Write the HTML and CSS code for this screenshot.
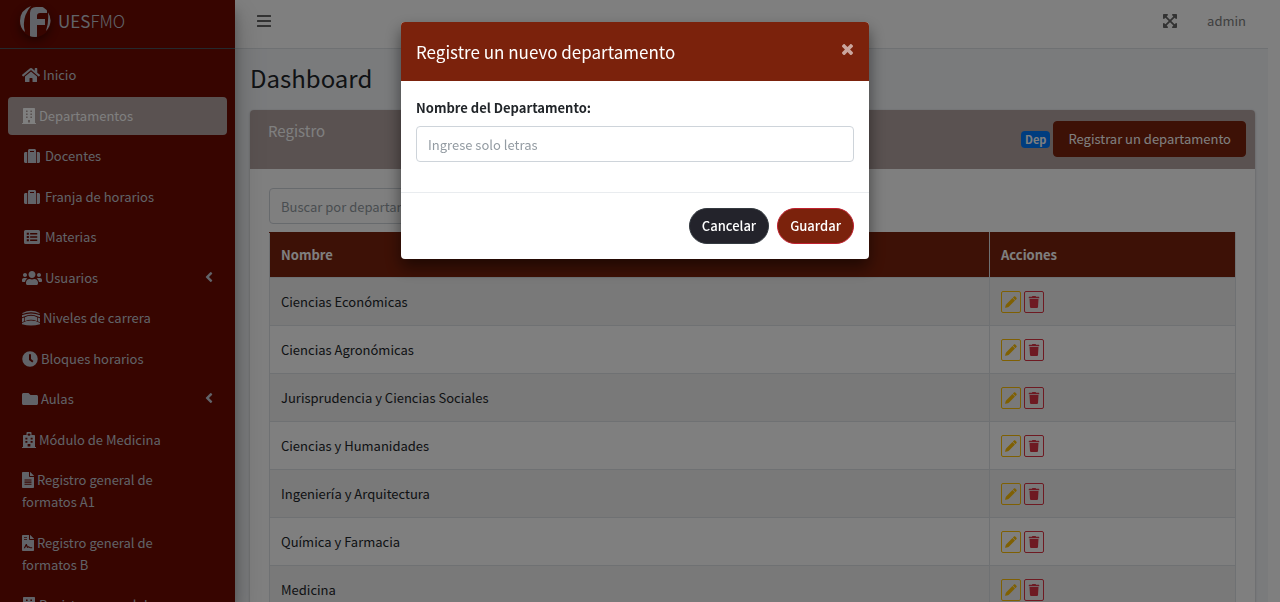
FILE: index.html
```html
<!DOCTYPE html>
<html lang="es">
<head>
<meta charset="utf-8">
<meta name="viewport" content="width=device-width, initial-scale=1">
<title>UESFMO - Departamentos</title>
<link rel="stylesheet" href="styles.css">
</head>
<body>
<svg class="sprite" aria-hidden="true">
  <symbol id="home" viewBox="0 0 576 512"><path d="M280.37 148.26L96 300.11V464a16 16 0 0 0 16 16l112.06-.29a16 16 0 0 0 15.92-16V368a16 16 0 0 1 16-16h64a16 16 0 0 1 16 16v95.64a16 16 0 0 0 16 16.05L464 480a16 16 0 0 0 16-16V300L295.67 148.26a12.19 12.19 0 0 0-15.3 0zM571.6 251.47L488 182.56V44.05a12 12 0 0 0-12-12h-56a12 12 0 0 0-12 12v72.61L318.47 43a48 48 0 0 0-61 0L4.34 251.47a12 12 0 0 0-1.6 16.9l25.5 31A12 12 0 0 0 45.15 301l235.22-193.74a12.19 12.19 0 0 1 15.3 0L530.9 301a12 12 0 0 0 16.9-1.6l25.5-31a12 12 0 0 0-1.7-16.93z"/></symbol>
  <symbol id="building" viewBox="0 0 448 512"><path fill-rule="evenodd" d="M436 480h-20V24a24 24 0 0 0-24-24H56a24 24 0 0 0-24 24v456H12a12 12 0 0 0-12 12v20h448v-20a12 12 0 0 0-12-12zM128 76h52v52h-52zM128 172h52v52h-52zM128 268h52v52h-52zM268 76h52v52h-52zM268 172h52v52h-52zM268 268h52v52h-52zM192 384h64v80h-64z"/></symbol>
  <symbol id="suitcase" viewBox="0 0 512 512"><path fill-rule="evenodd" d="M128 480h256V80c0-26.500-21.500-48-48-48H176c-26.500 0-48 21.500-48 48v400zm64-384h128v32H192V96zm320 80v256c0 26.500-21.500 48-48 48h-56V128h56c26.500 0 48 21.500 48 48zM104 480H48c-26.500 0-48-21.500-48-48V176c0-26.500 21.500-48 48-48h56v352z"/></symbol>
  <symbol id="list" viewBox="0 0 512 512"><path fill-rule="evenodd" d="M48 32h416a48 48 0 0 1 48 48v352a48 48 0 0 1-48 48H48a48 48 0 0 1-48-48V80a48 48 0 0 1 48-48zM88 118v68h68v-68zM88 222v68h68v-68zM88 326v68h68v-68zM196 130v44h228v-44zM196 234v44h228v-44zM196 338v44h228v-44z"/></symbol>
  <symbol id="users" viewBox="0 0 640 512"><path d="M96 224c35.300 0 64-28.700 64-64s-28.700-64-64-64-64 28.700-64 64 28.700 64 64 64zm448 0c35.300 0 64-28.700 64-64s-28.700-64-64-64-64 28.700-64 64 28.700 64 64 64zm32 32h-64c-17.600 0-33.500 7.100-45.100 18.600 40.300 22.100 68.900 62 75.100 109.400h66c17.700 0 32-14.300 32-32v-32c0-35.300-28.700-64-64-64zm-256 0c61.900 0 112-50.100 112-112S381.900 32 320 32 208 82.100 208 144s50.100 112 112 112zm76.800 32h-8.300c-20.800 10-43.900 16-68.500 16s-47.600-6-68.500-16h-8.300C179.600 288 128 339.600 128 403.200V432c0 26.500 21.500 48 48 48h288c26.500 0 48-21.500 48-48v-28.800c0-63.600-51.600-115.200-115.200-115.200zm-223.700-13.400C161.500 263.100 145.600 256 128 256H64c-35.300 0-64 28.700-64 64v32c0 17.700 14.300 32 32 32h65.900c6.300-47.400 34.900-87.300 75.200-109.400z"/></symbol>
  <symbol id="levels" viewBox="0 0 576 512"><path d="M14 96Q288-42 562 96v34Q288 10 14 130zM0 166Q288 50 576 166v64l-66-22Q288 100 66 208L0 230zM0 262l70-24v120L0 390zM576 262l-70-24v120l70 32zM92 232Q288 142 484 232v126Q288 270 92 358zM0 412Q288 256 576 412v40Q288 540 0 452z"/></symbol>
  <symbol id="clock" viewBox="0 0 512 512"><path fill-rule="evenodd" d="M256 8a248 248 0 1 0 0 496 248 248 0 0 0 0-496zM224 104h64v150l78 62-38 50-104-78z"/></symbol>
  <symbol id="folder" viewBox="0 0 512 512"><path d="M464 128H272l-64-64H48C21.500 64 0 85.500 0 112v288c0 26.500 21.500 48 48 48h416c26.500 0 48-21.500 48-48V176c0-26.500-21.500-48-48-48z"/></symbol>
  <symbol id="hospital" viewBox="0 0 448 512"><path fill-rule="evenodd" d="M448 492v20H0v-20c0-7 5-12 12-12h20V120c0-14 10-24 24-24h88V24c0-14 10-24 24-24h112c14 0 24 10 24 24v72h88c14 0 24 10 24 24v360h20c7 0 12 5 12 12zM180 384v80h88v-80zM108 180v56h64v-56zM276 180v56h64v-56zM108 284v56h64v-56zM276 284v56h64v-56zM206 38v28h-28v34h28v28h36v-28h28V66h-28V38z"/></symbol>
  <symbol id="file" viewBox="0 0 384 512"><path fill-rule="evenodd" d="M224 136V0H24C10 0 0 10 0 24v464c0 14 10 24 24 24h336c14 0 24-10 24-24V160H248c-13 0-24-11-24-24zM80 236h224v36H80zM80 304h224v36H80zM80 372h224v36H80zM256 0v128h128v-6L263 0z"/></symbol>
  <symbol id="contract" viewBox="0 0 384 512"><path fill-rule="evenodd" d="M224 136V0H24C10 0 0 10 0 24v464c0 14 10 24 24 24h336c14 0 24-10 24-24V160H248c-13 0-24-11-24-24zM64 62h96v26H64zM64 128h96v26H64zM58 414l62-116c8-16 28-16 36 0l28 68c22-16 46-12 58 8 8 12 18 16 34 16h50v32h-54c-28 0-44-10-56-28-14 20-44 28-60 4l-20-44-42 72H58zM256 0v128h128v-6L263 0z"/></symbol>
  <symbol id="chevron" viewBox="0 0 256 512"><path d="M32 239L168 103a24 24 0 0 1 34 0l22 22a24 24 0 0 1 0 34L127 256l97 96a24 24 0 0 1 0 34l-22 23a24 24 0 0 1-34 0L32 273a24 24 0 0 1 0-34z"/></symbol>
  <symbol id="bars" viewBox="0 0 448 512"><path d="M16 66h416a16 16 0 0 1 16 16v30a16 16 0 0 1-16 16H16a16 16 0 0 1-16-16V82a16 16 0 0 1 16-16zM16 225h416a16 16 0 0 1 16 16v30a16 16 0 0 1-16 16H16a16 16 0 0 1-16-16v-30a16 16 0 0 1 16-16zM16 384h416a16 16 0 0 1 16 16v30a16 16 0 0 1-16 16H16a16 16 0 0 1-16-16v-30a16 16 0 0 1 16-16z"/></symbol>
  <symbol id="expand" viewBox="0 0 448 512"><path d="M448 56v112c0 21-26 32-41 17l-36-36-107 107 107 107 36-36c15-15 41-4 41 17v112c0 13-11 24-24 24H312c-21 0-32-26-17-41l36-36-107-107-107 107 36 36c15 15 4 41-17 41H24c-13 0-24-11-24-24V344c0-21 26-32 41-17l36 36 107-107L77 149l-36 36c-15 15-41 4-41-17V56c0-13 11-24 24-24h112c21 0 32 26 17 41l-36 36 107 107 107-107-36-36c-15-15-4-41 17-41h112c13 0 24 11 24 24z"/></symbol>
  <symbol id="pencil" viewBox="0 0 512 512"><path d="M490 130l-46 46-108-108 46-46c16-16 40-16 56 0l52 52c16 16 16 40 0 56zM318 86l108 108-262 262c-12 12-24 18-40 22L30 506c-14 4-28-10-24-24l28-94c4-16 10-28 22-40z"/></symbol>
  <symbol id="trash" viewBox="0 0 448 512"><path d="M432 32H312l-9-19a24 24 0 0 0-22-13H167a24 24 0 0 0-22 13l-9 19H16A16 16 0 0 0 0 48v32a16 16 0 0 0 16 16h416a16 16 0 0 0 16-16V48a16 16 0 0 0-16-16zM32 128l21 339a48 48 0 0 0 48 45h246a48 48 0 0 0 48-45l21-339z"/></symbol>
  <symbol id="times" viewBox="0 0 352 352"><path d="M258 176l82-82c16-16 16-36 0-52L310 12c-16-16-36-16-52 0l-82 82-82-82C78-4 58-4 42 12L12 42c-16 16-16 36 0 52l82 82-82 82c-16 16-16 36 0 52l30 30c16 16 36 16 52 0l82-82 82 82c16 16 36 16 52 0l30-30c16-16 16-36 0-52z"/></symbol>
</svg>

<div class="app">
  <aside class="sidebar">
    <a class="brand" href="#">
      <svg class="brand-logo" viewBox="0 0 32 32" aria-hidden="true"><path d="M12 1Q1 5 1 16q0 7 5 11Q2 13 12 1zM11 32V8q0-6 6-6h11v6h-7q-3 0-3 3v3h8v6h-8v12zM29 7q6 10-2 19 3-9 2-19z"/></svg>
      <span class="brand-text"><b>UES</b>FMO</span>
    </a>
    <nav>
      <ul class="menu">
        <li><a href="#"><svg class="i18"><use href="#home"/></svg> Inicio</a></li>
        <li><a class="active" href="#"><svg class="i14"><use href="#building"/></svg> Departamentos</a></li>
        <li><a href="#"><svg class="i20"><use href="#suitcase"/></svg> Docentes</a></li>
        <li><a href="#"><svg class="i20"><use href="#suitcase"/></svg> Franja de horarios</a></li>
        <li><a href="#"><svg class="i20"><use href="#list"/></svg> Materias</a></li>
        <li><a href="#"><svg class="i20"><use href="#users"/></svg> Usuarios<svg class="arrow"><use href="#chevron"/></svg></a></li>
        <li><a href="#"><svg class="i18"><use href="#levels"/></svg> Niveles de carrera</a></li>
        <li><a href="#"><svg class="i16"><use href="#clock"/></svg> Bloques horarios</a></li>
        <li><a href="#"><svg class="i16"><use href="#folder"/></svg> Aulas<svg class="arrow"><use href="#chevron"/></svg></a></li>
        <li><a href="#"><svg class="i14"><use href="#hospital"/></svg> Módulo de Medicina</a></li>
        <li><a href="#"><svg class="i12"><use href="#file"/></svg> Registro general de<br>formatos A1</a></li>
        <li><a href="#"><svg class="i12"><use href="#contract"/></svg> Registro general de<br>formatos B</a></li>
        <li><a href="#"><svg class="i14"><use href="#building"/></svg> Registro general de</a></li>
      </ul>
    </nav>
  </aside>

  <div class="page">
    <header class="topbar">
      <button class="icon-btn" type="button" aria-label="Menú"><svg class="i14"><use href="#bars"/></svg></button>
      <div class="topbar-right">
        <button class="icon-btn" type="button" aria-label="Pantalla completa"><svg class="i14"><use href="#expand"/></svg></button>
        <a href="#">admin</a>
      </div>
    </header>
    <main class="content">
      <h1>Dashboard</h1>
      <section class="card">
        <div class="card-header">
          <h2>Registro</h2>
          <div class="card-tools">
            <span class="badge">Dep</span>
            <button class="btn btn-main" type="button">Registrar un departamento</button>
          </div>
        </div>
        <div class="card-body">
          <input class="field search" type="text" placeholder="Buscar por departamento" aria-label="Buscar por departamento">
          <table class="table">
            <thead><tr><th>Nombre</th><th class="actions">Acciones</th></tr></thead>
            <tbody>
              <tr><td>Ciencias Económicas</td><td><button class="mini edit" type="button" aria-label="Editar"><svg><use href="#pencil"/></svg></button><button class="mini del" type="button" aria-label="Eliminar"><svg><use href="#trash"/></svg></button></td></tr>
              <tr><td>Ciencias Agronómicas</td><td><button class="mini edit" type="button" aria-label="Editar"><svg><use href="#pencil"/></svg></button><button class="mini del" type="button" aria-label="Eliminar"><svg><use href="#trash"/></svg></button></td></tr>
              <tr><td>Jurisprudencia y Ciencias Sociales</td><td><button class="mini edit" type="button" aria-label="Editar"><svg><use href="#pencil"/></svg></button><button class="mini del" type="button" aria-label="Eliminar"><svg><use href="#trash"/></svg></button></td></tr>
              <tr><td>Ciencias y Humanidades</td><td><button class="mini edit" type="button" aria-label="Editar"><svg><use href="#pencil"/></svg></button><button class="mini del" type="button" aria-label="Eliminar"><svg><use href="#trash"/></svg></button></td></tr>
              <tr><td>Ingeniería y Arquitectura</td><td><button class="mini edit" type="button" aria-label="Editar"><svg><use href="#pencil"/></svg></button><button class="mini del" type="button" aria-label="Eliminar"><svg><use href="#trash"/></svg></button></td></tr>
              <tr><td>Química y Farmacia</td><td><button class="mini edit" type="button" aria-label="Editar"><svg><use href="#pencil"/></svg></button><button class="mini del" type="button" aria-label="Eliminar"><svg><use href="#trash"/></svg></button></td></tr>
              <tr><td>Medicina</td><td><button class="mini edit" type="button" aria-label="Editar"><svg><use href="#pencil"/></svg></button><button class="mini del" type="button" aria-label="Eliminar"><svg><use href="#trash"/></svg></button></td></tr>
            </tbody>
          </table>
        </div>
      </section>
    </main>
  </div>
</div>

<div class="backdrop">
  <form class="modal" role="dialog" aria-modal="true" aria-labelledby="modal-title">
    <div class="modal-header">
      <h2 id="modal-title">Registre un nuevo departamento</h2>
      <button class="close" type="button" aria-label="Cerrar"><svg><use href="#times"/></svg></button>
    </div>
    <div class="modal-body">
      <label for="nombre">Nombre del Departamento:</label>
      <input class="field" id="nombre" type="text" placeholder="Ingrese solo letras">
    </div>
    <div class="modal-footer">
      <button class="btn btn-dark" type="button">Cancelar</button>
      <button class="btn btn-save" type="submit">Guardar</button>
    </div>
  </form>
</div>
</body>
</html>
```
FILE: styles.css
```css
* { box-sizing: border-box; }
body {
  margin: 0;
  overflow: hidden;
  background: #fff;
  color: #212529;
  font: 13px/22px "Noto Sans CJK SC", "Open Sans", sans-serif;
}
button, input { font: inherit; }
button { cursor: pointer; }
a { color: inherit; text-decoration: none; }
h1, h2 { margin: 0; font-weight: 400; }
svg { fill: currentColor; }
.sprite { display: none; }

.app {
  display: flex;
  height: 100vh;
  overflow: hidden;
  padding-right: 12px;
}

/* Sidebar */
.sidebar {
  flex: 0 0 235px;
  z-index: 1;
  overflow: hidden;
  background: #6e0a00;
  color: #c2c7d0;
  box-shadow: 0 14px 28px rgba(0, 0, 0, .25), 0 10px 10px rgba(0, 0, 0, .22);
}
.brand {
  display: flex;
  align-items: center;
  gap: 7px;
  height: 49px;
  padding: 0 19px 6px;
  border-bottom: 1px solid #4b545c;
  font-size: 17px;
}
.brand-logo {
  width: 32px;
  height: 32px;
  border-radius: 50%;
  box-shadow: 0 4px 8px rgba(0, 0, 0, .4);
}
.brand-text { font-weight: 300; }
.menu {
  margin: 0;
  padding: 7px 8px;
  list-style: none;
}
.menu li { margin-bottom: 3px; }
.menu li:nth-child(even) { margin-bottom: 2px; }
.menu a {
  display: block;
  position: relative;
  padding: 8px 14px;
  border-radius: 4px;
}
.menu a.active { background: #b4a4a2; color: #fff; }
.menu svg { height: 16px; vertical-align: -3px; }
.menu .arrow {
  position: absolute;
  top: 10px;
  right: 14px;
  width: 8px;
  height: 16px;
}
.i12 { width: 12px; }
.i14 { width: 14px; }
.i16 { width: 16px; }
.i18 { width: 18px; }
.i20 { width: 20px; }

/* Page */
.page {
  flex: 1;
  min-width: 0;
  background: #f4f6f9;
}
.topbar {
  display: flex;
  justify-content: space-between;
  align-items: center;
  height: 49px;
  padding: 0 22px 6px;
  background: #fff;
  border-bottom: 1px solid #dee2e6;
  color: #808080;
}
.topbar-right { display: flex; align-items: center; gap: 30px; }
.icon-btn {
  display: flex;
  padding: 0;
  border: 0;
  background: none;
  color: #666;
}
.icon-btn svg { height: 16px; }
.content { padding: 13px 13px 0 15px; }
h1 { font-size: 24px; line-height: 32px; }
.card {
  margin-top: 16px;
  border-radius: 4px;
  background: #fff;
  box-shadow: 0 0 1px rgba(0, 0, 0, .13), 0 1px 3px rgba(0, 0, 0, .2);
}
.card-header {
  display: flex;
  justify-content: space-between;
  padding: 11px 9px 11px 18px;
  border-bottom: 1px solid #b4a4a2;
  border-radius: 4px 4px 0 0;
  background: #b4a4a2;
  color: #fff;
}
.card-header h2 { font-size: 15px; line-height: 20px; }
.card-tools { display: flex; align-items: center; gap: 3px; }
.badge {
  padding: 0 4px;
  border-radius: 4px;
  background: #007bff;
  font-size: 11px;
  font-weight: 700;
  line-height: 17px;
}
.card-body { padding: 19px; }

.btn {
  padding: 6px 12px;
  border: 1px solid transparent;
  border-radius: 4px;
  color: #fff;
  line-height: 22px;
}
.btn-main { padding: 6px 14px; background: #7b220c; border-color: #7b220c; }
.field {
  display: block;
  width: 100%;
  height: 36px;
  padding: 6px 11px;
  border: 1px solid #ced4da;
  border-radius: 4px;
  background: #fff;
  color: #495057;
}
.field::placeholder { color: #939ba2; opacity: 1; }
.search { width: 50%; margin-bottom: 8px; }

.table {
  width: 100%;
  border-collapse: collapse;
}
.table th, .table td {
  height: 48px;
  padding: 0 11px;
  border: 1px solid #dee2e6;
  text-align: left;
}
.table th {
  height: 45px;
  background: #7b220c;
  border-top-color: #7b220c;
  color: #fff;
  font-weight: 700;
}
.table tbody tr:nth-child(odd) { background: #f2f2f2; }
.table .actions { width: 246px; }
.mini {
  display: inline-flex;
  align-items: center;
  justify-content: center;
  width: 20px;
  height: 22px;
  margin-right: 3px;
  padding: 0;
  border: 1px solid;
  border-radius: 2px;
  background: none;
  vertical-align: middle;
}
.mini svg { width: 12px; height: 12px; }
.edit { color: #ffc107; }
.del { color: #dc3545; }

/* Modal */
.backdrop {
  position: fixed;
  inset: 0;
  z-index: 10;
  padding: 22px 10px 22px 0;
  background: rgba(0, 0, 0, .5);
}
.modal {
  max-width: 468px;
  margin: 0 auto;
  overflow: hidden;
  border-radius: 4px;
  background: #fff;
  box-shadow: 0 8px 16px rgba(0, 0, 0, .5);
}
.modal-header {
  display: flex;
  justify-content: space-between;
  padding: 15px;
  background: #7b220c;
  color: #fff;
}
.modal-header h2 { font-size: 17px; line-height: 29px; }
.close {
  align-self: center;
  display: flex;
  padding: 0 1px 4px;
  border: 0;
  background: none;
  color: #fff;
  opacity: .6;
}
.close svg { width: 11px; height: 11px; }
.modal-body { padding: 16px 15px 30px; }
.modal-body label {
  display: block;
  margin-bottom: 7px;
  font-weight: 700;
}
.modal-footer {
  display: flex;
  justify-content: flex-end;
  gap: 8px;
  padding: 15px;
  border-top: 1px solid #e9ecef;
}
.modal-footer .btn { border-radius: 18px; font-weight: 500; }
.btn-dark { background: #23232b; border-color: #343a40; }
.btn-save { background: #7b220c; border-color: #c0202f; }
```
